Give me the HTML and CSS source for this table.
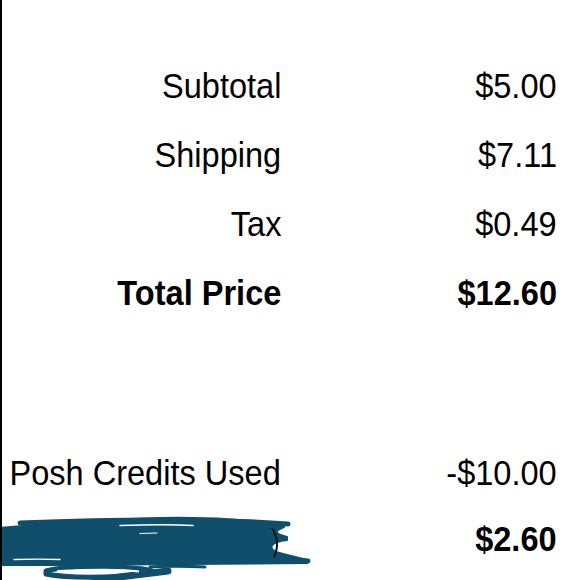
FILE: index.html
```
<!DOCTYPE html>
<html>
<head>
<meta charset="utf-8">
<link rel="stylesheet" href="styles.css">
</head>
<body>
<div class="page">
  <div class="group group-top">
    <div class="label">Subtotal</div><div class="value">$5.00</div>
    <div class="label">Shipping</div><div class="value">$7.11</div>
    <div class="label">Tax</div><div class="value">$0.49</div>
    <div class="label bold">Total Price</div><div class="value bold">$12.60</div>
  </div>
  <div class="group group-bottom">
    <div class="label">Posh Credits Used</div><div class="value">-$10.00</div>
    <div class="label"></div><div class="value bold">$2.60</div>
  </div>
  <svg class="scribble" viewBox="0 512 320 68" width="320" height="68" aria-hidden="true">
    <g fill="#0f4f6b" stroke="#0f4f6b" stroke-linecap="round" stroke-linejoin="round">
      <path d="M0 528 C40 524 100 520 160 518 C210 517 250 520 284 524 L284 527 C276 530 272 533 287 537 L287 540 C270 542 268 548 276 552 C290 556 300 558 308 560 L307 563 C250 564 160 564 60 565 C30 565 10 565 0 565 Z" stroke-width="2"/>
      <path d="M20 523 C120 519 220 519 288 524" fill="none" stroke-width="5"/>
      <path d="M40 561 C150 560 250 559 308 561" fill="none" stroke-width="5"/>
      <path d="M46 571 C70 565 140 566 152 571 C140 578 70 579 46 574 Z" fill="none" stroke-width="5"/>
      <path d="M95 580 C120 577 145 574 168 571" fill="none" stroke-width="7"/>
      <path d="M150 567 C160 566 190 566 205 567" fill="none" stroke-width="3"/>
    </g>
    <g fill="none" stroke="#ffffff" stroke-linecap="round">
      <path d="M120 525.5 C150 524.5 175 524.5 193 525.5" stroke-width="1.6"/>
      <path d="M140 533.5 L157 533" stroke-width="1.2"/>
      <path d="M14 559.5 C30 559 45 559 60 559.5" stroke-width="1.4"/>
      <path d="M58 571 C90 569.5 125 569.5 138 571.5" stroke-width="2"/>
    </g>
    <path d="M272 528 Q281 542 274 557" fill="none" stroke="#111" stroke-width="2"/>
  </svg>
</div>
</body>
</html>
```

FILE: styles.css
```
html, body {
  margin: 0;
  padding: 0;
  background: #ffffff;
}

.page {
  position: relative;
  width: 578px;
  height: 580px;
  border-left: 2px solid #000;
  overflow: hidden;
  font-family: "Liberation Sans", Arial, Helvetica, sans-serif;
  color: #000;
  font-size: 35px;
}

.group {
  display: grid;
  grid-template-columns: 279px 276px;
}

.group-top {
  padding-top: 51px;
  line-height: 69px;
}

.group-bottom {
  margin-top: 113px;
  grid-template-rows: 66px 66px;
  line-height: 66px;
}

.label,
.value {
  justify-self: end;
  text-align: right;
  white-space: nowrap;
  transform: scaleX(0.93);
  transform-origin: right center;
}

.bold {
  font-weight: bold;
}

.scribble {
  position: absolute;
  left: -2px;
  top: 512px;
}
```
